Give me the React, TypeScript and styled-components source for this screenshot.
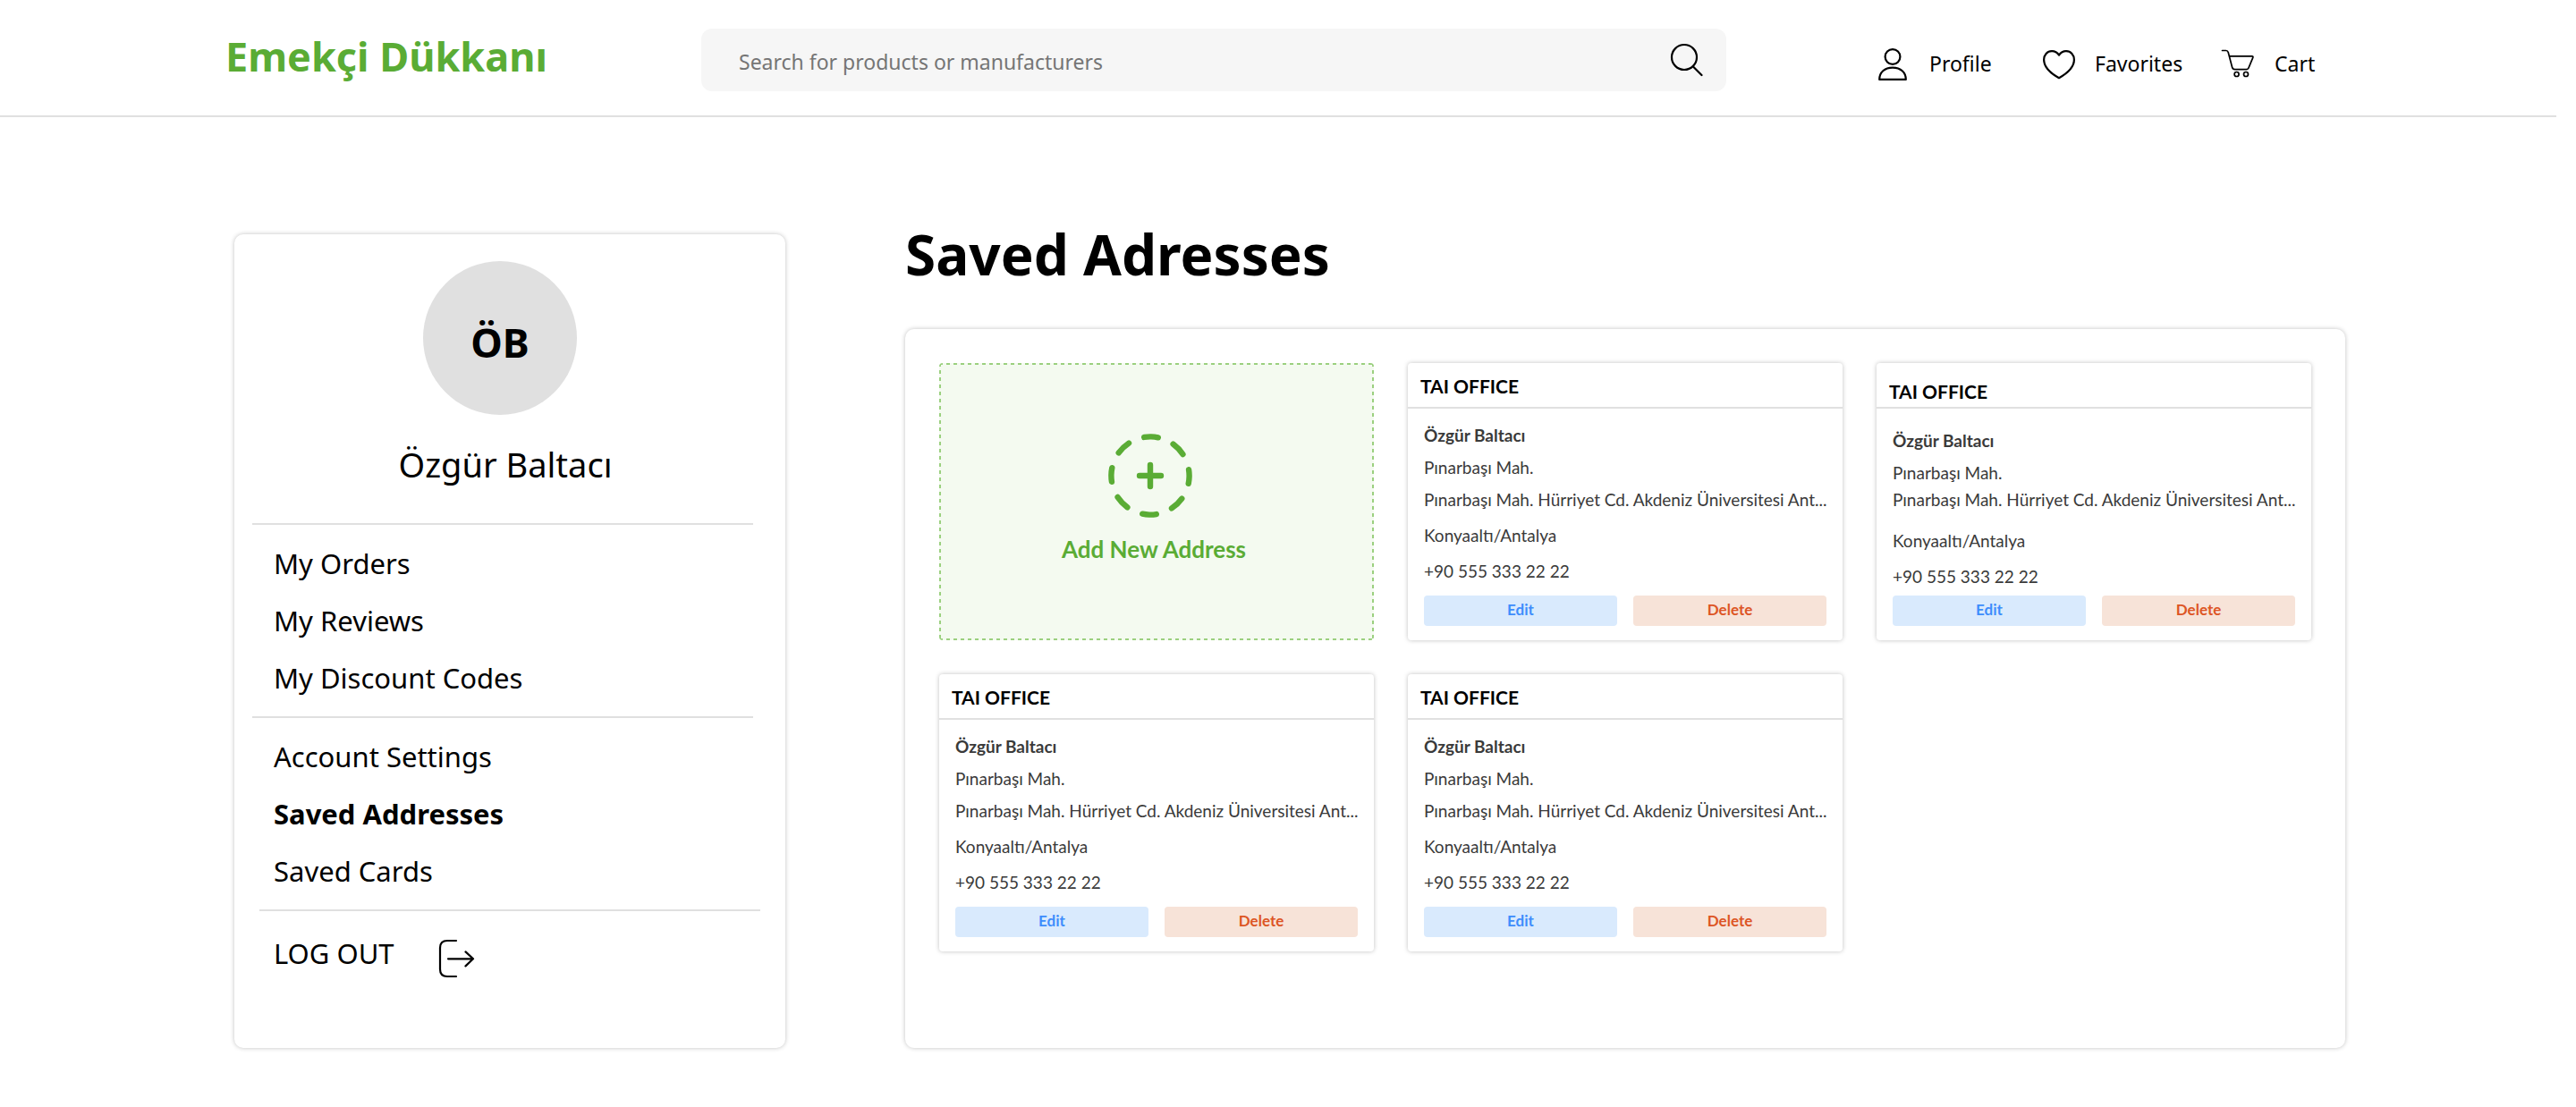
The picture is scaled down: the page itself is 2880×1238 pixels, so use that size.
import React from "react";
import styled, { createGlobalStyle, css } from "styled-components";

const color = {
  green: "#5aac35",
  greenBorder: "#9bd07f",
  greenTint: "#f4faf0",
  line: "#e0e0e0",
  field: "#f6f6f6",
  hint: "#757575",
  body: "#3a3a3a",
  blue: "#3d8dfc",
  blueTint: "#d9eafd",
  red: "#dd5524",
  redTint: "#f7e3d8",
};

const GlobalStyle = createGlobalStyle`
  *, *::before, *::after { box-sizing: border-box; }
  body {
    margin: 0;
    background: #fff;
    color: #000;
    font-family: "Noto Sans", "Open Sans", sans-serif;
  }
  h1, h2, p, ul { margin: 0; padding: 0; }
  ul { list-style: none; }
  a { color: inherit; text-decoration: none; }
  button, input { font: inherit; color: inherit; border: 0; margin: 0; padding: 0; background: none; }
  button { cursor: pointer; }
  svg { display: block; flex: none; fill: none; stroke: currentColor; }
`;

/* ---------- header ---------- */

const Header = styled.header`
  display: flex;
  align-items: center;
  margin-right: 22px;
  padding: 32px 0 27px 252px;
  border-bottom: 2px solid ${color.line};
`;

const Brand = styled.a`
  flex: 0 0 532px;
  align-self: flex-start;
  color: ${color.green};
  font-size: 45px;
  font-weight: 700;
  line-height: 62px;
`;

const SearchForm = styled.form`
  display: flex;
  align-items: center;
  flex: 1 1 0;
  max-width: 1146px;
  height: 70px;
  padding: 0 26px 0 42px;
  border-radius: 12px;
  background: ${color.field};
`;

const SearchInput = styled.input`
  flex: 1;
  min-width: 0;
  height: 70px;
  padding-top: 4px;
  font-size: 23px;
  outline: none;

  &::placeholder {
    color: ${color.hint};
    opacity: 1;
  }
`;

const UserNav = styled.nav`
  display: grid;
  grid-template-columns: 185px 201px auto;
  align-self: flex-end;
  margin-left: 167px;
`;

const UserLink = styled.a`
  display: flex;
  align-items: center;
  gap: 22px;
  font-size: 23px;
  line-height: 62px;
`;

/* ---------- page ---------- */

const Main = styled.main`
  display: flex;
  gap: 134px;
  padding: 113px 258px 66px 262px;
`;

const panel = css`
  border-radius: 10px;
  background: #fff;
  box-shadow: 0 0 5px rgba(0, 0, 0, 0.25);
`;

const Sidebar = styled.aside`
  ${panel}
  flex: 0 0 616px;
  margin-top: 18px;
  padding: 30px 36px 0 20px;
`;

const Profile = styled.div`
  display: flex;
  flex-direction: column;
  align-items: center;
  gap: 31px;
  padding: 0 0 42px 6px;
`;

const Avatar = styled.div`
  display: flex;
  align-items: center;
  justify-content: center;
  width: 172px;
  height: 172px;
  margin-right: 12px;
  padding-top: 8px;
  border-radius: 50%;
  background: ${color.line};
  font-size: 45px;
  font-weight: 700;
`;

const ProfileName = styled.p`
  font-size: 38px;
  line-height: 48px;
`;

const MenuGroup = styled.ul<{ $shifted?: boolean }>`
  padding: 11px 0;

  &::before {
    content: "";
    display: block;
    height: 2px;
    margin: ${(p) => (p.$shifted ? "-11px -8px 15px 8px" : "-11px 0 11px")};
    background: ${color.line};
  }
`;

const MenuLink = styled.a<{ $active?: boolean }>`
  display: block;
  padding-left: 24px;
  font-size: 31px;
  font-weight: ${(p) => (p.$active ? 700 : 400)};
  line-height: 64px;
`;

const LogOutButton = styled.button`
  display: flex;
  align-items: center;
  gap: 48px;
  padding-left: 24px;
  font-size: 31px;
  line-height: 64px;
`;

const Content = styled.section`
  display: flex;
  flex-direction: column;
  flex: 1;
  min-width: 0;
  gap: 44px;
`;

const Title = styled.h1`
  font-size: 62px;
  font-weight: 700;
  line-height: 80px;
`;

const AddressPanel = styled.div`
  ${panel}
  display: grid;
  grid-template-columns: repeat(3, minmax(0, 1fr));
  gap: 38px;
  padding: 38px 38px 108px;
  font-family: Lato, "Open Sans", sans-serif;
`;

const dash = `${color.greenBorder} 0 4px, transparent 4px 8px`;

const AddCard = styled.button`
  display: flex;
  flex-direction: column;
  align-items: center;
  justify-content: center;
  gap: 19px;
  padding: 0 6px 8px 0;
  border-radius: 4px;
  background:
    repeating-linear-gradient(90deg, ${dash}) top / 100% 2px no-repeat,
    repeating-linear-gradient(90deg, ${dash}) bottom / 100% 2px no-repeat,
    repeating-linear-gradient(180deg, ${dash}) left / 2px 100% no-repeat,
    repeating-linear-gradient(180deg, ${dash}) right / 2px 100% no-repeat,
    ${color.greenTint};
  color: ${color.green};
  font-size: 26px;
  font-weight: 700;
  line-height: 32px;
`;

const Card = styled.article`
  border-radius: 4px;
  background: #fff;
  box-shadow: 0 0 5px rgba(0, 0, 0, 0.25);
`;

const CardTitle = styled.h2<{ $low?: boolean }>`
  height: 51px;
  padding: ${(p) => (p.$low ? "19px" : "13px")} 14px 0;
  border-bottom: 2px solid ${color.line};
  font-size: 21px;
  font-weight: 700;
  line-height: 26px;
`;

const CardBody = styled.div<{ $low?: boolean }>`
  display: flex;
  flex-direction: column;
  gap: 12px;
  padding: ${(p) => (p.$low ? "24px 18px 9px" : "18px 18px 15px")};
  color: ${color.body};
  font-size: 19px;
  line-height: 24px;
  white-space: nowrap;
`;

const Recipient = styled.p`
  font-weight: 700;
`;

const Street = styled.p<{ $low?: boolean }>`
  margin: ${(p) => (p.$low ? "-6px 0 10px" : "0 0 4px")};
`;

const Phone = styled.p`
  margin-top: 4px;
`;

const Actions = styled.div`
  display: grid;
  grid-template-columns: 1fr 1fr;
  gap: 18px;
  padding: 0 18px 16px;
`;

const ActionButton = styled.button<{ $danger?: boolean }>`
  height: 34px;
  padding-bottom: 3px;
  border-radius: 4px;
  background: ${(p) => (p.$danger ? color.redTint : color.blueTint)};
  color: ${(p) => (p.$danger ? color.red : color.blue)};
  font-size: 17px;
  font-weight: 700;
`;

/* ---------- icons ---------- */

const SearchIcon = () => (
  <svg width="38" height="38" viewBox="0 0 38 38" strokeWidth="2.2" strokeLinecap="round" aria-hidden>
    <circle cx="17" cy="16" r="14" />
    <path d="M27 26.5 36.5 36" />
  </svg>
);

const ProfileIcon = () => (
  <svg width="38" height="38" viewBox="0 0 38 38" strokeWidth="2.2" aria-hidden>
    <circle cx="19" cy="11.5" r="8.4" />
    <path d="M4.2 36.9C4.2 29 10 23.6 19 23.6S33.8 29 33.8 36.9Z" strokeLinejoin="round" />
  </svg>
);

const HeartIcon = () => (
  <svg width="38" height="38" viewBox="0 0 38 38" strokeWidth="2.2" strokeLinejoin="round" aria-hidden>
    <path d="M20 9.6C18 6.6 15.2 5.1 12 5.1 6.8 5.1 3.1 9.4 3.1 14.8 3.1 22.6 10 29.6 20 35.2 30 29.6 36.9 22.6 36.9 14.8 36.9 9.4 33.2 5.1 28 5.1 24.8 5.1 22 6.6 20 9.6Z" />
  </svg>
);

const CartIcon = () => (
  <svg width="38" height="38" viewBox="0 0 38 38" strokeWidth="1.7" strokeLinecap="round" strokeLinejoin="round" aria-hidden>
    <path d="M1.5 4.5H5.6Q7.6 4.5 8.2 6.5L12.6 23.2Q13.2 25.6 15.6 25.6H28.4Q30.6 25.6 31.2 23.4L35.8 12.4Q36.3 10.8 34.8 10.8H9.5" />
    <circle cx="17.6" cy="31" r="2.5" />
    <circle cx="28" cy="31" r="2.5" />
  </svg>
);

const LogOutIcon = () => (
  <svg width="44" height="56" viewBox="0 0 44 56" strokeWidth="2.2" strokeLinecap="round" strokeLinejoin="round" aria-hidden>
    <path d="M21 14H11Q3 14 3 22V46Q3 54 11 54H21" />
    <path d="M12 34.3H40M31.5 26.4 40 34.3 31.5 42.4" />
  </svg>
);

const AddIcon = () => (
  <svg width="102" height="94" viewBox="0 0 102 94" strokeWidth="6.4" strokeLinecap="round" aria-hidden>
    <circle cx="47" cy="47" r="43.6" pathLength="8" strokeDasharray="0.46 0.54" strokeDashoffset="0.23" transform="rotate(1.3 47 47)" />
    <path d="M47 35V59M35 47H59" />
  </svg>
);

/* ---------- data ---------- */

const addresses = [
  { id: 1 },
  { id: 2, low: true },
  { id: 3 },
  { id: 4 },
].map((entry) => ({
  low: false,
  ...entry,
  label: "TAI OFFICE",
  name: "Özgür Baltacı",
  district: "Pınarbaşı Mah.",
  street: "Pınarbaşı Mah. Hürriyet Cd. Akdeniz Üniversitesi Ant...",
  city: "Konyaaltı/Antalya",
  phone: "+90 555 333 22 22",
}));

type Address = (typeof addresses)[number];

const AddressCard = ({ address }: { address: Address }) => (
  <Card>
    <CardTitle $low={address.low}>{address.label}</CardTitle>
    <CardBody $low={address.low}>
      <Recipient>{address.name}</Recipient>
      <p>{address.district}</p>
      <Street $low={address.low}>{address.street}</Street>
      <p>{address.city}</p>
      <Phone>{address.phone}</Phone>
    </CardBody>
    <Actions>
      <ActionButton type="button">Edit</ActionButton>
      <ActionButton type="button" $danger>Delete</ActionButton>
    </Actions>
  </Card>
);

const orderLinks = ["My Orders", "My Reviews", "My Discount Codes"];
const accountLinks = ["Account Settings", "Saved Addresses", "Saved Cards"];

export default function App() {
  return (
    <>
      <GlobalStyle />
      <Header>
        <Brand href="#">Emekçi Dükkanı</Brand>
        <SearchForm role="search" onSubmit={(e) => e.preventDefault()}>
          <SearchInput
            type="text"
            aria-label="Search for products or manufacturers"
            placeholder="Search for products or manufacturers"
          />
          <button type="submit" aria-label="Search"><SearchIcon /></button>
        </SearchForm>
        <UserNav aria-label="User">
          <UserLink href="#profile"><ProfileIcon />Profile</UserLink>
          <UserLink href="#favorites"><HeartIcon />Favorites</UserLink>
          <UserLink href="#cart"><CartIcon />Cart</UserLink>
        </UserNav>
      </Header>

      <Main>
        <Sidebar>
          <Profile>
            <Avatar>ÖB</Avatar>
            <ProfileName>Özgür Baltacı</ProfileName>
          </Profile>
          <nav aria-label="Account">
            {[orderLinks, accountLinks].map((links) => (
              <MenuGroup key={links[0]}>
                {links.map((label) => (
                  <li key={label}>
                    <MenuLink href="#" $active={label === "Saved Addresses"}>{label}</MenuLink>
                  </li>
                ))}
              </MenuGroup>
            ))}
            <MenuGroup $shifted>
              <li>
                <LogOutButton type="button">LOG OUT<LogOutIcon /></LogOutButton>
              </li>
            </MenuGroup>
          </nav>
        </Sidebar>

        <Content>
          <Title>Saved Adresses</Title>
          <AddressPanel>
            <AddCard type="button">
              <AddIcon />
              Add New Address
            </AddCard>
            {addresses.map((address) => (
              <AddressCard key={address.id} address={address} />
            ))}
          </AddressPanel>
        </Content>
      </Main>
    </>
  );
}
